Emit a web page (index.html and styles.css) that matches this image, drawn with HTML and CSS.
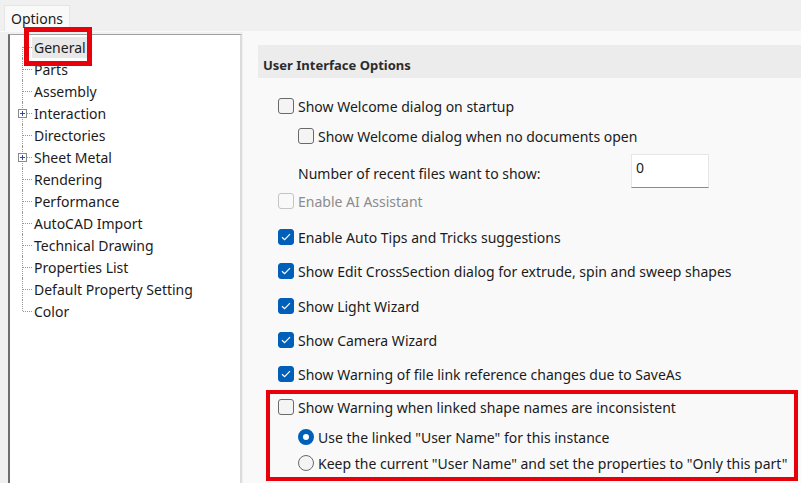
FILE: index.html
```html
<!DOCTYPE html>
<html lang="en">
<head>
<meta charset="utf-8">
<title>Options</title>
<link rel="stylesheet" href="styles.css">
</head>
<body>
<div class="window">
  <div class="tabs">
    <div class="tab">Options</div>
  </div>
  <div class="page">
    <div class="tree">
      <div class="node first"><span class="twig"></span><span class="label selected">General</span></div>
      <div class="node"><span class="twig"></span><span class="label">Parts</span></div>
      <div class="node"><span class="twig"></span><span class="label">Assembly</span></div>
      <div class="node"><span class="twig"><svg class="plus" width="9" height="9" viewBox="0 0 9 9"><rect x="0.5" y="0.5" width="8" height="8" fill="#fff" stroke="#8a8a8a"/><path d="M2 4.5h5M4.5 2v5" stroke="#2b4f9a" stroke-width="1"/></svg></span><span class="label">Interaction</span></div>
      <div class="node"><span class="twig"></span><span class="label">Directories</span></div>
      <div class="node"><span class="twig"><svg class="plus" width="9" height="9" viewBox="0 0 9 9"><rect x="0.5" y="0.5" width="8" height="8" fill="#fff" stroke="#8a8a8a"/><path d="M2 4.5h5M4.5 2v5" stroke="#2b4f9a" stroke-width="1"/></svg></span><span class="label">Sheet Metal</span></div>
      <div class="node"><span class="twig"></span><span class="label">Rendering</span></div>
      <div class="node"><span class="twig"></span><span class="label">Performance</span></div>
      <div class="node"><span class="twig"></span><span class="label">AutoCAD Import</span></div>
      <div class="node"><span class="twig"></span><span class="label">Technical Drawing</span></div>
      <div class="node"><span class="twig"></span><span class="label">Properties List</span></div>
      <div class="node"><span class="twig"></span><span class="label">Default Property Setting</span></div>
      <div class="node last"><span class="twig"></span><span class="label">Color</span></div>
      <div class="mark-general"></div>
    </div>
    <div class="panel">
      <div class="section-head">User Interface Options</div>
      <div class="opts">
        <div class="row r1"><span class="cb"></span><span>Show Welcome dialog on startup</span></div>
        <div class="row r2 sub"><span class="cb"></span><span>Show Welcome dialog when no documents open</span></div>
        <div class="row r3 sub"><span class="num-label">Number of recent files want to show:</span><span class="num-input">0</span></div>
        <div class="row r4 disabled"><span class="cb"></span><span>Enable AI Assistant</span></div>
        <div class="row r5"><span class="cb on"><svg width="10" height="8" viewBox="0 0 10 8"><path d="M1 4.2l2.6 2.5L9 1.2" fill="none" stroke="#fff" stroke-width="1.2"/></svg></span><span>Enable Auto Tips and Tricks suggestions</span></div>
        <div class="row r6"><span class="cb on"><svg width="10" height="8" viewBox="0 0 10 8"><path d="M1 4.2l2.6 2.5L9 1.2" fill="none" stroke="#fff" stroke-width="1.2"/></svg></span><span>Show Edit CrossSection dialog for extrude, spin and sweep shapes</span></div>
        <div class="row r7"><span class="cb on"><svg width="10" height="8" viewBox="0 0 10 8"><path d="M1 4.2l2.6 2.5L9 1.2" fill="none" stroke="#fff" stroke-width="1.2"/></svg></span><span>Show Light Wizard</span></div>
        <div class="row r8"><span class="cb on"><svg width="10" height="8" viewBox="0 0 10 8"><path d="M1 4.2l2.6 2.5L9 1.2" fill="none" stroke="#fff" stroke-width="1.2"/></svg></span><span>Show Camera Wizard</span></div>
        <div class="row r9"><span class="cb on"><svg width="10" height="8" viewBox="0 0 10 8"><path d="M1 4.2l2.6 2.5L9 1.2" fill="none" stroke="#fff" stroke-width="1.2"/></svg></span><span>Show Warning of file link reference changes due to SaveAs</span></div>
        <div class="group">
          <div class="row r10"><span class="cb"></span><span>Show Warning when linked shape names are inconsistent</span></div>
          <div class="row r11 sub"><span class="rb on"></span><span>Use the linked "User Name" for this instance</span></div>
          <div class="row r12 sub"><span class="rb"></span><span>Keep the current "User Name" and set the properties to "Only this part"</span></div>
        </div>
      </div>
    </div>
  </div>
</div>
</body>
</html>
```
FILE: styles.css
```css
* { box-sizing: border-box; }
html, body { margin: 0; padding: 0; }
body {
  background: #f0f0f0;
  font-family: "Noto Sans", "Open Sans", sans-serif;
  font-size: 14px;
  color: #1b1b1b;
  overflow: hidden;
}
.window {
  width: 801px;
  height: 483px;
  display: flex;
  flex-direction: column;
}
.tabs {
  height: 31px;
  display: flex;
  align-items: flex-end;
  padding-left: 4px;
}
.tab {
  height: 26px;
  padding: 0 6px;
  background: #f9f9f9;
  border: 1px solid #e6e6e6;
  border-bottom: none;
  line-height: 25px;
  font-size: 14px;
}
.page {
  flex: 1;
  display: flex;
  padding-left: 8px;
  border-top: 1px solid #fafafa;
  min-height: 0;
}
.tree {
  position: relative;
  width: 234px;
  margin-top: 2px;
  background: #fff;
  border-top: 1px solid #a0a0a0;
  border-left: 2px solid #6e6e6e;
  border-right: 2px solid #dcdcdc;
  padding-top: 1px;
}
.node {
  height: 22px;
  display: flex;
  align-items: center;
}
.twig {
  position: relative;
  width: 22px;
  height: 22px;
  flex: none;
}
.twig::before {
  content: "";
  position: absolute;
  left: 12px;
  top: 0;
  height: 22px;
  border-left: 1px dotted #9a9a9a;
}
.node.first .twig::before { top: 11px; height: 11px; }
.node.last .twig::before { height: 11px; }
.twig::after {
  content: "";
  position: absolute;
  left: 13px;
  top: 11px;
  width: 9px;
  border-top: 1px dotted #9a9a9a;
}
.plus {
  position: absolute;
  left: 8px;
  top: 7px;
  z-index: 1;
}
.label {
  padding: 1px 2px;
  line-height: 19px;
  white-space: nowrap;
}
.label.selected { background: #e8e8e8; }
.mark-general {
  position: absolute;
  left: 14px;
  top: -8px;
  width: 68px;
  height: 39px;
  border: 5px solid #e8000b;
}
.panel {
  flex: 1;
  margin-left: 1px;
  background: #f9f9f9;
  padding-left: 15px;
  padding-top: 13px;
}
.section-head {
  height: 33px;
  background: #ececec;
  font-weight: bold;
  font-size: 13px;
  color: #2b2b2b;
  padding-left: 5px;
  padding-top: 8px;
  line-height: 25px;
}
.opts {
  padding-left: 20px;
  display: flex;
  flex-direction: column;
}
.row {
  height: 20px;
  display: flex;
  align-items: center;
  white-space: nowrap;
}
.row.sub { padding-left: 20px; }
.cb, .rb {
  width: 16px;
  height: 16px;
  flex: none;
  margin-right: 4px;
  border: 1px solid #6a6a6a;
  background: #f4f4f4;
  border-radius: 3px;
  display: flex;
  align-items: center;
  justify-content: center;
}
.cb.on {
  background: #005fb8;
  border-color: #005fb8;
}
.rb { border-radius: 50%; }
.rb.on {
  background: #fff;
  border: 5px solid #005fb8;
}
.disabled { color: #8c8c8c; }
.disabled .cb { border-color: #c4c4c4; background: #f9f9f9; }
.r1 { margin-top: 18px; }
.r2 { margin-top: 10px; }
.r3 { margin-top: 8px; height: 34px; }
.num-label { width: 333px; padding-top: 4px; }
.num-input {
  width: 78px;
  height: 34px;
  background: #fff;
  border: 1px solid #e6e6e6;
  border-bottom: 1px solid #8a8a8a;
  padding-left: 4px;
  line-height: 26px;
}
.r4 { margin-top: 3px; }
.r5 { margin-top: 16px; }
.r6 { margin-top: 14px; }
.r7 { margin-top: 15px; }
.r8 { margin-top: 14px; }
.r9 { margin-top: 14px; }
.group {
  margin-top: 6px;
  margin-left: -12px;
  margin-right: 3px;
  border: 4px solid #e8000b;
  padding: 3px 0 4px 8px;
}
.r11 { margin-top: 10px; }
.r12 { margin-top: 6px; }
```
